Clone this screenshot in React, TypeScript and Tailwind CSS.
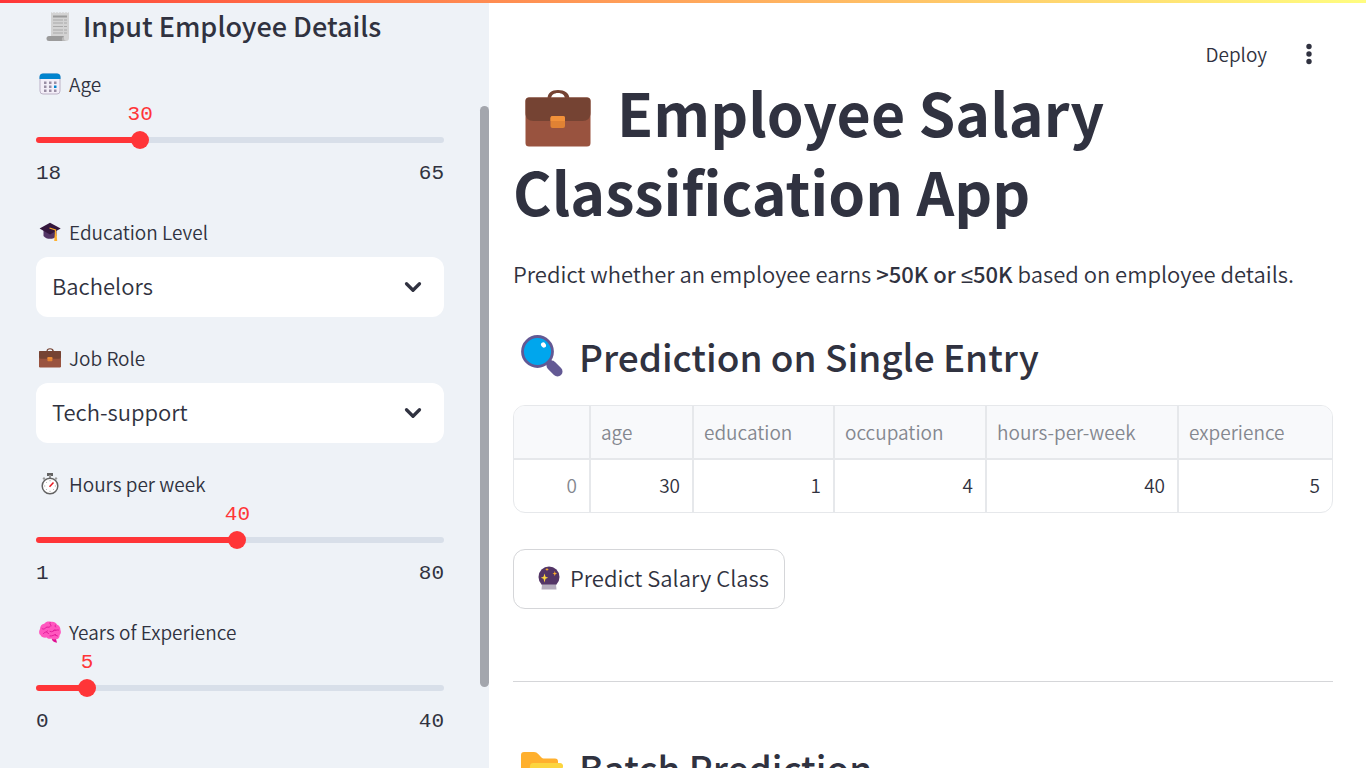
import { useState, type ReactNode } from "react";
import { ChevronDown } from "lucide-react";

type IconProps = { className: string };

function Briefcase({ className }: IconProps) {
  return (
    <svg viewBox="0 0 65 57" className={className} aria-hidden="true">
      <path d="M22 9C22 3 26 0 32.500 0S44 3 44 9h-4.500c0-4-3-6-7-6s-7 2-7 6z" fill="#754333" />
      <rect x="0" y="7.500" width="65" height="49" rx="3.500" fill="#99533f" />
      <path d="M3.500 7.500h58A3.500 3.500 0 0 1 65 11v12c0 5-3 8-8 8H8c-5 0-8-3-8-8V11a3.500 3.500 0 0 1 3.500-3.500z" fill="#754333" />
      <rect x="25" y="26" width="14.500" height="12" rx="2" fill="#e08234" />
      <path d="M27 26h10.500a2 2 0 0 1 2 2v3H25v-3a2 2 0 0 1 2-2z" fill="#f2913a" />
    </svg>
  );
}

function Receipt({ className }: IconProps) {
  return (
    <svg viewBox="0 0 24 31" className={className} aria-hidden="true">
      <path d="M5 1l1.500 1L8 1l1.500 1L11 1l1.500 1L14 1l1.500 1L17 1l1.500 1L20 1l1.500 1L23 1v26a3 3 0 0 1-3 3H5z" fill="#d3d3d3" />
      <path d="M7 4.500h14v2H7z" fill="#9b9b9b" />
      <path d="M7 9h10M7 12h10M7 15.500h10M7 19h10M7 22h10M18 9h3M18 12h3M18 15.500h3M18 19h3M18 22h3" stroke="#aaa" strokeWidth="1.200" />
      <path d="M3 25h15v5H3a2.500 2.500 0 0 1 0-5z" fill="#9b9b9b" />
      <path d="M18 25v2.500c0 1.500 1 2.500 2.500 2.500H17c-1.500 0-1-2-1-3z" fill="#b9b9b9" />
    </svg>
  );
}

function Calendar({ className }: IconProps) {
  return (
    <svg viewBox="0 0 22 22" className={className} aria-hidden="true">
      <rect x="1" y="1" width="20" height="20" rx="3" fill="#f3eef8" stroke="#bbb1c6" />
      <path d="M4 .5h14A3.500 3.500 0 0 1 21.500 4v2H.5V4A3.500 3.500 0 0 1 4 .5z" fill="#0084ce" />
      <path d="M5 8.500h2.500V11H5zM10 8.500h2.500V11H10zM15 8.500h2.500V11H15zM5 12.500h2.500V15H5zM10 12.500h2.500V15H10zM5 16.500h2.500V19H5zM10 16.500h2.500V19H10zM15 16.500h2.500V19H15z" fill="#998ea4" />
      <path d="M15 12.500h2.500V15H15z" fill="#0084ce" />
    </svg>
  );
}

function GradCap({ className }: IconProps) {
  return (
    <svg viewBox="0 0 22 22" className={className} aria-hidden="true">
      <path d="M4.500 8v7c1.500 2 4 2.800 6.500 2.800s5-.8 6.500-2.800V8z" fill="#533566" />
      <path d="M11 1.800L21.700 7.500 11 13.500.6 7.500z" fill="#34173d" />
      <path d="M10.500 7l6 2v7" fill="none" stroke="#f9a825" strokeWidth="1.300" />
      <path d="M16 12.500h1.500l.7 7.500h-3z" fill="#ffb02e" />
    </svg>
  );
}

function Stopwatch({ className }: IconProps) {
  return (
    <svg viewBox="0 0 22 22" className={className} aria-hidden="true">
      <path d="M8 0h6v3H8z" fill="#636363" />
      <path d="M10 2h2v3h-2zM3.500 5.500L5 4l1.500 1.500L5 7zM15.500 5.500L17 4l1.500 1.500L17 7z" fill="#999" />
      <circle cx="11" cy="13" r="7.800" fill="#fff" stroke="#636363" strokeWidth="1.500" />
      <path d="M11 7v1.300M11 17.800V19M5 13h1.300M15.800 13H17M7 9l.8.8M7 17l.8-.8M15 17l-.8-.8" stroke="#999" strokeWidth=".8" />
      <path d="M10.500 13.800l4-4.300" stroke="#e81921" strokeWidth="1.500" />
    </svg>
  );
}

function Brain({ className }: IconProps) {
  return (
    <svg viewBox="0 0 22 22" className={className} aria-hidden="true">
      <path d="M12.500 17.500l4.500.5 1 3.800c-3-.3-4.700-1.800-5.500-4.300z" fill="#df0d91" />
      <path d="M1.500 14C-.5 13 0 9.500 1 8c0-3 2-5 4.200-5.200C7 .2 10 .3 12 .8c3-.5 5.500 1 6.200 3 2.300 1 3.300 3 3.200 5 1 2.500.3 4.300-.8 5.200.3 2.500-1.600 4.500-4 4.200-1.600.6-3 .2-4-.8-1.600.8-4 .5-5-.8-2.800.4-5.300-.4-6.100-2.600z" fill="#ff57bf" />
      <path d="M3 7.500c1.500 1.500 3 0 4-1 1.500-1.200 2.500.8 4-.8M11 1.500c-1 1.500 1.500 2 1 3.500M4.500 12.500c1-1.800 3-1 4-2.500M7.500 11l2 1.500M11 10.500c2 1 4-.5 5-2M14.500 9.500c2 .5 3-1 5-.5M11 15c2.500.2 3.500-1 5.500-1.500M16 14l2.500 1M16.500 4c-1 .5-.8 1.800.3 2" fill="none" stroke="#e31b9a" strokeWidth="1" strokeLinecap="round" />
    </svg>
  );
}

function Magnifier({ className }: IconProps) {
  return (
    <svg viewBox="0 0 42 42" className={className} aria-hidden="true">
      <path d="M27.500 28.500l3-3" stroke="#533566" strokeWidth="5" />
      <path d="M30.500 30.500l6 6" stroke="#635994" strokeWidth="10" strokeLinecap="round" />
      <circle cx="16.500" cy="16.500" r="15" fill="#00a6ed" stroke="#635994" strokeWidth="2.800" />
      <ellipse cx="22.500" cy="10" rx="2.300" ry="2.800" transform="rotate(-35 22.500 10)" fill="#fff" />
    </svg>
  );
}

function CrystalBall({ className }: IconProps) {
  return (
    <svg viewBox="0 0 22 24" className={className} aria-hidden="true">
      <circle cx="11" cy="11" r="10.500" fill="#533566" />
      <path d="M4 18.500h14l.5 5h-15z" fill="#b4acbc" />
      <path d="M6.500 7.500l1 3.300 2.700 1-2.700 1-1 3.700-1-3.700-2.700-1 2.700-1z" fill="#fcd53f" />
      <path d="M16.800 5l.6 2 1.700.6-1.700.6-.6 2-.6-2-1.700-.6 1.700-.6zM9 1.500l.5 1.400 1.400.5-1.400.5L9 5.300l-.5-1.400-1.400-.5 1.400-.5z" fill="#ffb02e" />
    </svg>
  );
}

function Folder({ className }: IconProps) {
  return (
    <svg viewBox="0 -6 42 42" className={className} aria-hidden="true">
      <path d="M0 3a3 3 0 0 1 3-3h10c2 0 3 .7 4.200 2l2.800 3c1 1.200 2 1.500 3.500 1.500H34a3 3 0 0 1 3 3V36H3a3 3 0 0 1-3-3z" fill="#ffb02e" />
      <path d="M12 11h27a3 3 0 0 1 3 3.500L38.500 33a3.500 3.500 0 0 1-3.500 3H3c3 0 3.500-1.500 4-4l2-18c.3-2 1-3 3-3z" fill="#fcd53f" />
    </svg>
  );
}

function FieldLabel({ id, icon, children }: { id: string; icon: ReactNode; children: ReactNode }) {
  return (
    <label htmlFor={id} className="flex h-[30px] items-center gap-2 pl-[3px] text-[19px]">
      {icon}
      {children}
    </label>
  );
}

type SliderProps = { id: string; label: string; icon: ReactNode; min: number; max: number; initial: number };

function SliderField({ id, label, icon, min, max, initial }: SliderProps) {
  const [value, setValue] = useState(initial);
  const percent = ((value - min) / (max - min)) * 100;
  return (
    <div>
      <FieldLabel id={id} icon={icon}>{label}</FieldLabel>
      <div className="relative h-[29px] font-['Liberation_Mono',monospace] text-[21px] leading-8 text-[#ff3538]">
        <output htmlFor={id} className="absolute -translate-x-1/2" style={{ left: `${percent}%` }}>{value}</output>
      </div>
      <div className="grid h-6 items-center">
        <div
          className="col-start-1 row-start-1 h-[6px] rounded-full"
          style={{ background: `linear-gradient(to right, #ff3538 ${percent}%, #d8dfe9 ${percent}%)` }}
        />
        <input
          id={id}
          type="range"
          min={min}
          max={max}
          value={value}
          onChange={(e) => setValue(Number(e.target.value))}
          className="col-start-1 row-start-1 -ml-[9px] h-6 w-[calc(100%+18px)] cursor-pointer appearance-none bg-transparent [&::-webkit-slider-thumb]:size-[18px] [&::-webkit-slider-thumb]:appearance-none [&::-webkit-slider-thumb]:rounded-full [&::-webkit-slider-thumb]:bg-[#ff3538]"
        />
      </div>
      <div className="mt-1 flex h-[35px] items-center justify-between font-['Liberation_Mono',monospace] text-[21px]">
        <span>{min}</span>
        <span>{max}</span>
      </div>
    </div>
  );
}

type SelectProps = { id: string; label: string; icon: ReactNode; options: string[] };

function SelectField({ id, label, icon, options }: SelectProps) {
  return (
    <div>
      <FieldLabel id={id} icon={icon}>{label}</FieldLabel>
      <div className="mt-[10px] grid items-center">
        <select id={id} className="col-start-1 row-start-1 h-[60px] w-full appearance-none rounded-xl bg-white px-4 pb-1 text-[22px]">
          {options.map((o) => <option key={o}>{o}</option>)}
        </select>
        <ChevronDown className="pointer-events-none col-start-1 row-start-1 mr-[18px] size-[26px] justify-self-end" strokeWidth={3} />
      </div>
    </div>
  );
}

const columns = [
  { name: "age", value: 30, width: "w-[103px]" },
  { name: "education", value: 1, width: "w-[141px]" },
  { name: "occupation", value: 4, width: "w-[152px]" },
  { name: "hours-per-week", value: 40, width: "w-[192px]" },
  { name: "experience", value: 5, width: "" },
];

function EntryTable() {
  return (
    <div className="mt-6 overflow-hidden rounded-xl border border-[#e6e8eb]">
      <table className="w-full table-fixed border-separate border-spacing-0 text-[19px]">
        <thead>
          <tr className="h-[54px] bg-[#f8f9fb] text-[#84878f]">
            <td className="w-[75px] border-b-2 border-[#e6e8eb]" />
            {columns.map((c) => (
              <th key={c.name} scope="col" className={`${c.width} border-b-2 border-l-2 border-[#e6e8eb] pl-[10px] text-left font-[350]`}>
                {c.name}
              </th>
            ))}
          </tr>
        </thead>
        <tbody>
          <tr className="h-[52px]">
            <th scope="row" className="pr-3 pb-[2px] text-right font-[350] text-[#84878f]">0</th>
            {columns.map((c) => (
              <td key={c.name} className="border-l-2 border-[#e6e8eb] pr-3 pb-[2px] text-right">{c.value}</td>
            ))}
          </tr>
        </tbody>
      </table>
    </div>
  );
}

function SectionTitle({ icon, children, className }: { icon: ReactNode; children: ReactNode; className: string }) {
  return (
    <h2 className={`flex h-[50px] items-center gap-4 pl-2 text-[37px] leading-[50px] font-medium ${className}`}>
      {icon}
      {children}
    </h2>
  );
}

export default function App() {
  return (
    <div className="relative flex h-screen overflow-hidden bg-white font-['Noto_Sans_CJK_SC','Liberation_Sans',sans-serif] font-[350] text-[#303240]">
      <div className="absolute inset-x-0 top-0 z-10 h-[3px] bg-linear-to-r from-[#ff3538] to-[#fffd80]" />

      <aside className="relative w-[489px] shrink-0 overflow-hidden bg-[#eef2f7] pt-[10px] pr-[45px] pl-9">
        <h2 className="mb-[27px] flex h-8 items-center gap-[13px] pl-[10px] text-[27px] leading-8 font-medium">
          <Receipt className="h-[31px] w-6 shrink-0" />
          Input Employee Details
        </h2>
        <div className="flex flex-col gap-[26px]">
          <SliderField id="age" label="Age" icon={<Calendar className="size-[22px]" />} min={18} max={65} initial={30} />
          <SelectField id="education" label="Education Level" icon={<GradCap className="size-[22px]" />} options={["Bachelors"]} />
          <SelectField id="job" label="Job Role" icon={<Briefcase className="size-[22px]" />} options={["Tech-support"]} />
          <SliderField id="hours" label="Hours per week" icon={<Stopwatch className="size-[22px]" />} min={1} max={80} initial={40} />
          <SliderField id="experience" label="Years of Experience" icon={<Brain className="size-[22px]" />} min={0} max={40} initial={5} />
        </div>
        <div className="absolute top-[106px] right-0 h-[581px] w-[9px] rounded-full bg-[#a3a6ad]" />
      </aside>

      <main className="min-w-0 flex-1 overflow-hidden pr-[33px] pl-6">
        <header className="flex h-[72px] items-center justify-end gap-[30px] pt-9 pr-[12px] text-[19px]">
          <button type="button">Deploy</button>
          <button type="button" aria-label="Main menu" className="flex w-6 justify-center">
            <svg viewBox="0 0 6 22" className="h-[22px] w-[6px]" fill="currentColor" aria-hidden="true">
              <circle cx="3" cy="3.500" r="2.700" />
              <circle cx="3" cy="11" r="2.700" />
              <circle cx="3" cy="18.500" r="2.700" />
            </svg>
          </button>
        </header>

        <h1 className="text-[59px] leading-[79px] font-bold">
          <Briefcase className="mr-[26px] ml-3 inline h-[57px] w-[66px] align-[-10px]" />
          Employee Salary Classification App
        </h1>
        <p className="mt-6 text-[22px] leading-[38px]">
          Predict whether an employee earns{" "}
          <strong className="font-medium">
            &gt;50K or <span className="font-['Noto_Sans',sans-serif]">≤</span>50K
          </strong>{" "}
          based on employee details.
        </p>

        <SectionTitle icon={<Magnifier className="size-[42px] shrink-0" />} className="mt-[38px]">
          Prediction on Single Entry
        </SectionTitle>
        <EntryTable />

        <button type="button" className="mt-9 flex h-[60px] items-center gap-[10px] rounded-xl border border-[#d5d6d9] pr-[15px] pb-[3px] pl-6 text-[22px]">
          <CrystalBall className="h-6 w-[22px]" />
          Predict Salary Class
        </button>

        <hr className="mt-[72px] border-[#d5d6d9]" />

        <SectionTitle icon={<Folder className="size-[42px] shrink-0" />} className="mt-[60px]">
          Batch Prediction
        </SectionTitle>
      </main>
    </div>
  );
}
